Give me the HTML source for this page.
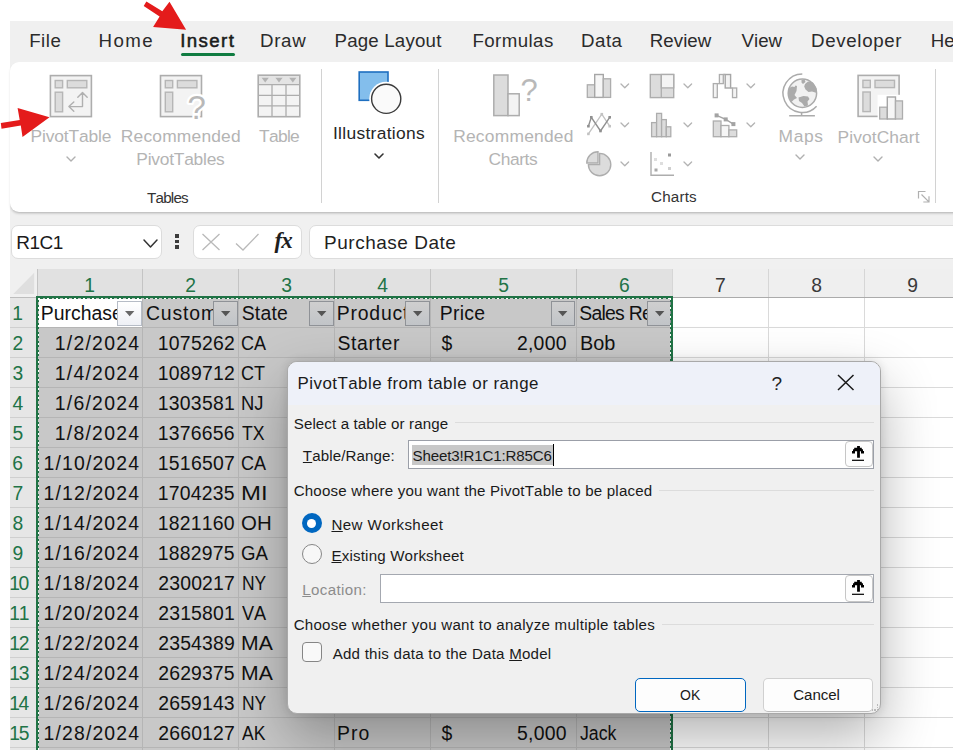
<!DOCTYPE html>
<html lang="en"><head><meta charset="utf-8"><title>PivotTable from table or range</title>
<style>

html,body{margin:0;padding:0;background:#fff;}
body{width:953px;height:750px;overflow:hidden;font-family:"Liberation Sans",sans-serif;}
#app{position:relative;width:953px;height:750px;overflow:hidden;background:#fff;}
#app div{position:absolute;box-sizing:border-box;}
#app svg{position:absolute;overflow:visible;}
.t{position:absolute;white-space:pre;font-kerning:none;}
u{text-decoration:underline;text-underline-offset:1px;text-decoration-thickness:1px;}

</style></head><body>
<div id="app">
<div style="left:10px;top:21px;width:943px;height:249px;background:#f0f0f0;"></div>
<span class="t" style="top:30.40px;font-size:18.7px;line-height:21px;left:29.17px;color:#2b2b2b;letter-spacing:0.511px;">File</span>
<span class="t" style="top:30.40px;font-size:18.7px;line-height:21px;left:98.47px;color:#2b2b2b;letter-spacing:1.461px;">Home</span>
<span class="t" style="top:30.40px;font-size:18.7px;line-height:21px;left:259.97px;color:#2b2b2b;letter-spacing:0.717px;">Draw</span>
<span class="t" style="top:30.40px;font-size:18.7px;line-height:21px;left:334.47px;color:#2b2b2b;letter-spacing:0.196px;">Page Layout</span>
<span class="t" style="top:30.40px;font-size:18.7px;line-height:21px;left:472.47px;color:#2b2b2b;letter-spacing:0.411px;">Formulas</span>
<span class="t" style="top:30.40px;font-size:18.7px;line-height:21px;left:580.97px;color:#2b2b2b;letter-spacing:0.511px;">Data</span>
<span class="t" style="top:30.40px;font-size:18.7px;line-height:21px;left:649.87px;color:#2b2b2b;letter-spacing:0.015px;">Review</span>
<span class="t" style="top:30.40px;font-size:18.7px;line-height:21px;left:741.62px;color:#2b2b2b;">View</span>
<span class="t" style="top:30.40px;font-size:18.7px;line-height:21px;left:811.07px;color:#2b2b2b;letter-spacing:0.663px;">Developer</span>
<span class="t" style="top:30.40px;font-size:18.7px;line-height:21px;left:180.17px;color:#1b1b1b;letter-spacing:1.399px;-webkit-text-stroke:0.55px #1b1b1b;">Insert</span>
<span class="t" style="top:30.40px;font-size:18.7px;line-height:21px;left:930.67px;color:#2b2b2b;">Help</span>
<div style="left:181.4px;top:53px;width:53.4px;height:3.4px;background:#107c41;border-radius:2px;"></div>
<div style="left:10px;top:62px;width:960px;height:150px;background:#fff;border-radius:9px;box-shadow:0 2px 3px -1px rgba(0,0,0,.28);"></div>
<div style="left:321px;top:69px;width:1px;height:134px;background:#d2d2d2;"></div>
<div style="left:438px;top:69px;width:1px;height:134px;background:#d2d2d2;"></div>
<div style="left:935px;top:69px;width:1px;height:134px;background:#d2d2d2;"></div>
<span class="t" style="top:188.60px;font-size:15.2px;line-height:17px;left:147.06px;color:#333;letter-spacing:-0.786px;">Tables</span>
<span class="t" style="top:188.10px;font-size:15.2px;line-height:17px;left:651.03px;color:#333;letter-spacing:0.190px;">Charts</span>
<span class="t" style="top:125.60px;font-size:17.4px;line-height:20px;left:30.57px;color:#b4b4b4;letter-spacing:-0.134px;">PivotTable</span>
<span class="t" style="top:125.60px;font-size:17.4px;line-height:20px;left:120.77px;color:#b4b4b4;letter-spacing:0.196px;">Recommended</span>
<span class="t" style="top:149.20px;font-size:17.4px;line-height:20px;left:136.37px;color:#b4b4b4;letter-spacing:-0.245px;">PivotTables</span>
<span class="t" style="top:125.60px;font-size:17.4px;line-height:20px;left:259.11px;color:#b4b4b4;letter-spacing:-0.715px;">Table</span>
<span class="t" style="top:123.20px;font-size:17.4px;line-height:20px;left:332.99px;color:#262626;letter-spacing:0.303px;">Illustrations</span>
<span class="t" style="top:125.60px;font-size:17.4px;line-height:20px;left:453.17px;color:#b4b4b4;letter-spacing:0.236px;">Recommended</span>
<span class="t" style="top:149.20px;font-size:17.4px;line-height:20px;left:488.52px;color:#b4b4b4;letter-spacing:-0.427px;">Charts</span>
<span class="t" style="top:125.60px;font-size:17.4px;line-height:20px;left:778.57px;color:#b4b4b4;letter-spacing:0.603px;">Maps</span>
<span class="t" style="top:127.40px;font-size:17.4px;line-height:20px;left:837.57px;color:#b4b4b4;letter-spacing:0.092px;">PivotChart</span>
<svg style="left:65.5px;top:155.7px" width="10" height="6" viewBox="-5.0 -3.0 10 6"><path d="M-4.0 -2.0 L0 2.0 L4.0 -2.0" fill="none" stroke="#b0b0b0" stroke-width="1.4" stroke-linecap="round" stroke-linejoin="round"/></svg>
<svg style="left:374.0px;top:152.5px" width="10" height="6" viewBox="-5.0 -3.0 10 6"><path d="M-4.0 -2.0 L0 2.0 L4.0 -2.0" fill="none" stroke="#333" stroke-width="1.6" stroke-linecap="round" stroke-linejoin="round"/></svg>
<svg style="left:795.0px;top:154.0px" width="10" height="6" viewBox="-5.0 -3.0 10 6"><path d="M-4.0 -2.0 L0 2.0 L4.0 -2.0" fill="none" stroke="#b0b0b0" stroke-width="1.4" stroke-linecap="round" stroke-linejoin="round"/></svg>
<svg style="left:872.5px;top:156.0px" width="10" height="6" viewBox="-5.0 -3.0 10 6"><path d="M-4.0 -2.0 L0 2.0 L4.0 -2.0" fill="none" stroke="#b0b0b0" stroke-width="1.4" stroke-linecap="round" stroke-linejoin="round"/></svg>
<div style="left:10.5px;top:224.5px;width:151px;height:34px;background:#fff;border:1px solid #dcdcdc;border-radius:7px;"></div>
<span class="t" style="top:231.60px;font-size:19px;line-height:21px;left:16.24px;color:#1a1a1a;letter-spacing:-0.530px;">R1C1</span>
<svg style="left:143.3px;top:238.5px" width="15" height="9" viewBox="-7.5 -4.5 15 9"><path d="M-6.5 -3.5 L0 3.5 L6.5 -3.5" fill="none" stroke="#333" stroke-width="1.5" stroke-linecap="round" stroke-linejoin="round"/></svg>
<div style="left:175.3px;top:234.3px;width:3.3px;height:3.3px;background:#3c3c3c;"></div>
<div style="left:175.3px;top:239.85000000000002px;width:3.3px;height:3.3px;background:#3c3c3c;"></div>
<div style="left:175.3px;top:245.4px;width:3.3px;height:3.3px;background:#3c3c3c;"></div>
<div style="left:192.5px;top:224.5px;width:109px;height:34px;background:#fff;border:1px solid #dcdcdc;border-radius:7px;"></div>
<svg style="left:200px;top:231px" width="64" height="22" viewBox="200 231 64 22"><path d="M202.5 234 L219.5 250 M219.5 234 L202.5 250" stroke="#b9b9b9" stroke-width="1.3" fill="none"/><path d="M236 243.5 L243 250 L258.5 234" stroke="#b9b9b9" stroke-width="1.3" fill="none"/></svg>
<span class="t" style="left:274.5px;top:227.5px;font-family:'Liberation Serif',serif;font-style:italic;font-weight:bold;font-size:23px;line-height:26px;color:#1e1e1e;letter-spacing:-1px;">fx</span>
<div style="left:308.5px;top:224.5px;width:660px;height:34px;background:#fff;border:1px solid #dcdcdc;border-radius:7px;"></div>
<span class="t" style="top:232.20px;font-size:19px;line-height:21px;left:324.04px;color:#1f1f1f;letter-spacing:0.510px;">Purchase Date</span>
<div style="left:10px;top:297px;width:943px;height:460px;background:#fff;"></div>
<div style="left:10px;top:269px;width:943px;height:28px;background:#efefef;"></div>
<div style="left:37px;top:269px;width:635px;height:28px;background:#e1e1e1;"></div>
<div style="left:10px;top:269px;width:27px;height:28px;background:#f0f0f0;"></div>
<svg style="left:0;top:0" width="40" height="300" viewBox="0 0 40 300"><path d="M34.2 272.8 L34.2 293.9 L13.2 293.9 Z" fill="#dfdfdf"/></svg>
<div style="left:10px;top:297px;width:27px;height:460px;background:#e6e6e6;"></div>
<div style="left:37px;top:297px;width:635px;height:460px;background:#c8c8c8;"></div>
<div style="left:39px;top:299px;width:103px;height:28px;background:#fff;"></div>
<div style="left:142px;top:269px;width:1px;height:28px;background:#c4c4c4;"></div>
<div style="left:142px;top:297px;width:1px;height:460px;background:#b5b5b5;"></div>
<div style="left:238px;top:269px;width:1px;height:28px;background:#c4c4c4;"></div>
<div style="left:238px;top:297px;width:1px;height:460px;background:#b5b5b5;"></div>
<div style="left:334px;top:269px;width:1px;height:28px;background:#c4c4c4;"></div>
<div style="left:334px;top:297px;width:1px;height:460px;background:#b5b5b5;"></div>
<div style="left:430px;top:269px;width:1px;height:28px;background:#c4c4c4;"></div>
<div style="left:430px;top:297px;width:1px;height:460px;background:#b5b5b5;"></div>
<div style="left:576px;top:269px;width:1px;height:28px;background:#c4c4c4;"></div>
<div style="left:576px;top:297px;width:1px;height:460px;background:#b5b5b5;"></div>
<div style="left:672px;top:269px;width:1px;height:28px;background:#d6d6d6;"></div>
<div style="left:672px;top:297px;width:1px;height:460px;background:#dadada;"></div>
<div style="left:768px;top:269px;width:1px;height:28px;background:#d6d6d6;"></div>
<div style="left:768px;top:297px;width:1px;height:460px;background:#dadada;"></div>
<div style="left:864px;top:269px;width:1px;height:28px;background:#d6d6d6;"></div>
<div style="left:864px;top:297px;width:1px;height:460px;background:#dadada;"></div>
<div style="left:37px;top:269px;width:1px;height:28px;background:#c4c4c4;"></div>
<div style="left:10px;top:297px;width:27px;height:1px;background:#bdbdbd;"></div>
<div style="left:10px;top:327px;width:27px;height:1px;background:#cfcfcf;"></div>
<div style="left:37px;top:327px;width:635px;height:1px;background:#b5b5b5;"></div>
<div style="left:672px;top:327px;width:281px;height:1px;background:#dadada;"></div>
<div style="left:10px;top:357px;width:27px;height:1px;background:#cfcfcf;"></div>
<div style="left:37px;top:357px;width:635px;height:1px;background:#b5b5b5;"></div>
<div style="left:672px;top:357px;width:281px;height:1px;background:#dadada;"></div>
<div style="left:10px;top:387px;width:27px;height:1px;background:#cfcfcf;"></div>
<div style="left:37px;top:387px;width:635px;height:1px;background:#b5b5b5;"></div>
<div style="left:672px;top:387px;width:281px;height:1px;background:#dadada;"></div>
<div style="left:10px;top:417px;width:27px;height:1px;background:#cfcfcf;"></div>
<div style="left:37px;top:417px;width:635px;height:1px;background:#b5b5b5;"></div>
<div style="left:672px;top:417px;width:281px;height:1px;background:#dadada;"></div>
<div style="left:10px;top:447px;width:27px;height:1px;background:#cfcfcf;"></div>
<div style="left:37px;top:447px;width:635px;height:1px;background:#b5b5b5;"></div>
<div style="left:672px;top:447px;width:281px;height:1px;background:#dadada;"></div>
<div style="left:10px;top:477px;width:27px;height:1px;background:#cfcfcf;"></div>
<div style="left:37px;top:477px;width:635px;height:1px;background:#b5b5b5;"></div>
<div style="left:672px;top:477px;width:281px;height:1px;background:#dadada;"></div>
<div style="left:10px;top:507px;width:27px;height:1px;background:#cfcfcf;"></div>
<div style="left:37px;top:507px;width:635px;height:1px;background:#b5b5b5;"></div>
<div style="left:672px;top:507px;width:281px;height:1px;background:#dadada;"></div>
<div style="left:10px;top:537px;width:27px;height:1px;background:#cfcfcf;"></div>
<div style="left:37px;top:537px;width:635px;height:1px;background:#b5b5b5;"></div>
<div style="left:672px;top:537px;width:281px;height:1px;background:#dadada;"></div>
<div style="left:10px;top:567px;width:27px;height:1px;background:#cfcfcf;"></div>
<div style="left:37px;top:567px;width:635px;height:1px;background:#b5b5b5;"></div>
<div style="left:672px;top:567px;width:281px;height:1px;background:#dadada;"></div>
<div style="left:10px;top:597px;width:27px;height:1px;background:#cfcfcf;"></div>
<div style="left:37px;top:597px;width:635px;height:1px;background:#b5b5b5;"></div>
<div style="left:672px;top:597px;width:281px;height:1px;background:#dadada;"></div>
<div style="left:10px;top:627px;width:27px;height:1px;background:#cfcfcf;"></div>
<div style="left:37px;top:627px;width:635px;height:1px;background:#b5b5b5;"></div>
<div style="left:672px;top:627px;width:281px;height:1px;background:#dadada;"></div>
<div style="left:10px;top:657px;width:27px;height:1px;background:#cfcfcf;"></div>
<div style="left:37px;top:657px;width:635px;height:1px;background:#b5b5b5;"></div>
<div style="left:672px;top:657px;width:281px;height:1px;background:#dadada;"></div>
<div style="left:10px;top:687px;width:27px;height:1px;background:#cfcfcf;"></div>
<div style="left:37px;top:687px;width:635px;height:1px;background:#b5b5b5;"></div>
<div style="left:672px;top:687px;width:281px;height:1px;background:#dadada;"></div>
<div style="left:10px;top:717px;width:27px;height:1px;background:#cfcfcf;"></div>
<div style="left:37px;top:717px;width:635px;height:1px;background:#b5b5b5;"></div>
<div style="left:672px;top:717px;width:281px;height:1px;background:#dadada;"></div>
<div style="left:10px;top:747px;width:27px;height:1px;background:#cfcfcf;"></div>
<div style="left:37px;top:747px;width:635px;height:1px;background:#b5b5b5;"></div>
<div style="left:672px;top:747px;width:281px;height:1px;background:#dadada;"></div>
<div style="left:10px;top:777px;width:27px;height:1px;background:#cfcfcf;"></div>
<div style="left:37px;top:777px;width:635px;height:1px;background:#b5b5b5;"></div>
<div style="left:672px;top:777px;width:281px;height:1px;background:#dadada;"></div>
<div style="left:672px;top:297px;width:281px;height:1px;background:#ababab;"></div>
<span class="t" style="top:274.50px;font-size:19.3px;line-height:21px;left:84.37px;color:#217346;">1</span>
<span class="t" style="top:274.50px;font-size:19.3px;line-height:21px;left:185.13px;color:#217346;">2</span>
<span class="t" style="top:274.50px;font-size:19.3px;line-height:21px;left:281.19px;color:#217346;">3</span>
<span class="t" style="top:274.50px;font-size:19.3px;line-height:21px;left:377.19px;color:#217346;">4</span>
<span class="t" style="top:274.50px;font-size:19.3px;line-height:21px;left:498.15px;color:#217346;">5</span>
<span class="t" style="top:274.50px;font-size:19.3px;line-height:21px;left:619.07px;color:#217346;">6</span>
<span class="t" style="top:274.50px;font-size:19.3px;line-height:21px;left:715.12px;color:#3a3a3a;">7</span>
<span class="t" style="top:274.50px;font-size:19.3px;line-height:21px;left:811.13px;color:#3a3a3a;">8</span>
<span class="t" style="top:274.50px;font-size:19.3px;line-height:21px;left:907.14px;color:#3a3a3a;">9</span>
<div style="left:10px;top:297px;width:27px;height:460px;overflow:hidden;">
<span class="t" style="top:5.80px;font-size:19.3px;line-height:21px;left:2.17px;color:#217346;">1</span>
<span class="t" style="top:35.80px;font-size:19.3px;line-height:21px;left:2.43px;color:#217346;">2</span>
<span class="t" style="top:65.80px;font-size:19.3px;line-height:21px;left:2.49px;color:#217346;">3</span>
<span class="t" style="top:95.80px;font-size:19.3px;line-height:21px;left:2.49px;color:#217346;">4</span>
<span class="t" style="top:125.80px;font-size:19.3px;line-height:21px;left:2.45px;color:#217346;">5</span>
<span class="t" style="top:155.80px;font-size:19.3px;line-height:21px;left:2.37px;color:#217346;">6</span>
<span class="t" style="top:185.80px;font-size:19.3px;line-height:21px;left:2.42px;color:#217346;">7</span>
<span class="t" style="top:215.80px;font-size:19.3px;line-height:21px;left:2.43px;color:#217346;">8</span>
<span class="t" style="top:245.80px;font-size:19.3px;line-height:21px;left:2.44px;color:#217346;">9</span>
<span class="t" style="top:275.80px;font-size:19.3px;line-height:21px;left:-0.87px;color:#217346;letter-spacing:-1.243px;">10</span>
<span class="t" style="top:305.80px;font-size:19.3px;line-height:21px;left:-0.87px;color:#217346;letter-spacing:-1.055px;">11</span>
<span class="t" style="top:335.80px;font-size:19.3px;line-height:21px;left:-0.87px;color:#217346;letter-spacing:-1.027px;">12</span>
<span class="t" style="top:365.80px;font-size:19.3px;line-height:21px;left:-0.87px;color:#217346;letter-spacing:-1.149px;">13</span>
<span class="t" style="top:395.80px;font-size:19.3px;line-height:21px;left:-0.87px;color:#217346;letter-spacing:-1.432px;">14</span>
<span class="t" style="top:425.80px;font-size:19.3px;line-height:21px;left:-0.87px;color:#217346;letter-spacing:-1.187px;">15</span>
</div>
<div style="left:37px;top:297px;width:80.5px;height:30px;overflow:hidden;">
<span class="t" style="left:3.81px;top:5.20px;font-size:19.4px;line-height:22px;color:#111;letter-spacing:-0.001px;">Purchase Date</span>
</div>
<div style="left:142px;top:297px;width:71.69999999999999px;height:30px;overflow:hidden;">
<span class="t" style="left:3.91px;top:5.20px;font-size:19.4px;line-height:22px;color:#111;letter-spacing:0.885px;">Customer</span>
</div>
<div style="left:238px;top:297px;width:71.69999999999999px;height:30px;overflow:hidden;">
<span class="t" style="left:3.72px;top:5.20px;font-size:19.4px;line-height:22px;color:#111;letter-spacing:0.186px;">State</span>
</div>
<div style="left:334px;top:297px;width:71.60000000000002px;height:30px;overflow:hidden;">
<span class="t" style="left:2.71px;top:5.20px;font-size:19.4px;line-height:22px;color:#111;letter-spacing:0.813px;">Product</span>
</div>
<div style="left:430px;top:297px;width:121px;height:30px;overflow:hidden;">
<span class="t" style="left:9.81px;top:5.20px;font-size:19.4px;line-height:22px;color:#111;letter-spacing:0.239px;">Price</span>
</div>
<div style="left:576px;top:297px;width:71.29999999999995px;height:30px;overflow:hidden;">
<span class="t" style="left:3.22px;top:5.20px;font-size:19.4px;line-height:22px;color:#111;letter-spacing:-0.726px;">Sales Rep</span>
</div>
<div style="left:117.1px;top:301.2px;width:24.5px;height:24.4px;background:linear-gradient(#ffffff,#eef0f5);border:1px solid #b6bcc6;"><svg style="left:6.7px;top:8.8px" width="10" height="6"><path d="M0 0 L9.4 0 L4.7 5.2 Z" fill="#686868"/></svg></div>
<div style="left:213.29999999999998px;top:301.2px;width:24.5px;height:24.4px;background:linear-gradient(#cfcfcf,#c1c4c8);border:1px solid #8f9297;"><svg style="left:6.7px;top:8.8px" width="10" height="6"><path d="M0 0 L9.4 0 L4.7 5.2 Z" fill="#555"/></svg></div>
<div style="left:309.3px;top:301.2px;width:24.5px;height:24.4px;background:linear-gradient(#cfcfcf,#c1c4c8);border:1px solid #8f9297;"><svg style="left:6.7px;top:8.8px" width="10" height="6"><path d="M0 0 L9.4 0 L4.7 5.2 Z" fill="#555"/></svg></div>
<div style="left:405.20000000000005px;top:301.2px;width:24.5px;height:24.4px;background:linear-gradient(#cfcfcf,#c1c4c8);border:1px solid #8f9297;"><svg style="left:6.7px;top:8.8px" width="10" height="6"><path d="M0 0 L9.4 0 L4.7 5.2 Z" fill="#555"/></svg></div>
<div style="left:550.6px;top:301.2px;width:24.5px;height:24.4px;background:linear-gradient(#cfcfcf,#c1c4c8);border:1px solid #8f9297;"><svg style="left:6.7px;top:8.8px" width="10" height="6"><path d="M0 0 L9.4 0 L4.7 5.2 Z" fill="#555"/></svg></div>
<div style="left:646.9px;top:301.2px;width:24.5px;height:24.4px;background:linear-gradient(#cfcfcf,#c1c4c8);border:1px solid #8f9297;"><svg style="left:6.7px;top:8.8px" width="10" height="6"><path d="M0 0 L9.4 0 L4.7 5.2 Z" fill="#555"/></svg></div>
<span class="t" style="top:331.80px;font-size:19.4px;line-height:22px;left:54.72px;color:#111;letter-spacing:1.261px;">1/2/2024</span>
<span class="t" style="top:331.80px;font-size:19.4px;line-height:22px;left:157.82px;color:#111;letter-spacing:0.238px;">1075262</span>
<span class="t" style="top:331.80px;font-size:19.4px;line-height:22px;left:241.28px;color:#111;transform:scaleX(0.9295);transform-origin:0 0;">CA</span>
<span class="t" style="top:331.80px;font-size:19.4px;line-height:22px;left:337.42px;color:#111;letter-spacing:0.631px;">Starter</span>
<span class="t" style="top:331.80px;font-size:19.4px;line-height:22px;left:441.59px;color:#111;">$</span>
<span class="t" style="top:331.80px;font-size:19.4px;line-height:22px;left:516.92px;color:#111;letter-spacing:0.272px;">2,000</span>
<span class="t" style="top:331.80px;font-size:19.4px;line-height:22px;left:579.57px;color:#111;transform:scaleX(1.0245);transform-origin:0 0;">Bob</span>
<span class="t" style="top:361.80px;font-size:19.4px;line-height:22px;left:54.72px;color:#111;letter-spacing:1.261px;">1/4/2024</span>
<span class="t" style="top:361.80px;font-size:19.4px;line-height:22px;left:157.82px;color:#111;letter-spacing:0.238px;">1089712</span>
<span class="t" style="top:361.80px;font-size:19.4px;line-height:22px;left:241.28px;color:#111;transform:scaleX(0.9292);transform-origin:0 0;">CT</span>
<span class="t" style="top:391.80px;font-size:19.4px;line-height:22px;left:54.72px;color:#111;letter-spacing:1.261px;">1/6/2024</span>
<span class="t" style="top:391.80px;font-size:19.4px;line-height:22px;left:157.82px;color:#111;letter-spacing:0.233px;">1303581</span>
<span class="t" style="top:391.80px;font-size:19.4px;line-height:22px;left:241.49px;color:#111;transform:scaleX(0.9478);transform-origin:0 0;">NJ</span>
<span class="t" style="top:421.80px;font-size:19.4px;line-height:22px;left:54.72px;color:#111;letter-spacing:1.261px;">1/8/2024</span>
<span class="t" style="top:421.80px;font-size:19.4px;line-height:22px;left:157.82px;color:#111;letter-spacing:0.217px;">1376656</span>
<span class="t" style="top:421.80px;font-size:19.4px;line-height:22px;left:241.80px;color:#111;transform:scaleX(0.9103);transform-origin:0 0;">TX</span>
<span class="t" style="top:451.80px;font-size:19.4px;line-height:22px;left:43.52px;color:#111;letter-spacing:1.155px;">1/10/2024</span>
<span class="t" style="top:451.80px;font-size:19.4px;line-height:22px;left:157.82px;color:#111;letter-spacing:0.238px;">1516507</span>
<span class="t" style="top:451.80px;font-size:19.4px;line-height:22px;left:241.28px;color:#111;transform:scaleX(0.9295);transform-origin:0 0;">CA</span>
<span class="t" style="top:481.80px;font-size:19.4px;line-height:22px;left:43.52px;color:#111;letter-spacing:1.155px;">1/12/2024</span>
<span class="t" style="top:481.80px;font-size:19.4px;line-height:22px;left:157.82px;color:#111;letter-spacing:0.211px;">1704235</span>
<span class="t" style="top:481.80px;font-size:19.4px;line-height:22px;left:241.04px;color:#111;transform:scaleX(1.2329);transform-origin:0 0;">MI</span>
<span class="t" style="top:511.80px;font-size:19.4px;line-height:22px;left:43.52px;color:#111;letter-spacing:1.155px;">1/14/2024</span>
<span class="t" style="top:511.80px;font-size:19.4px;line-height:22px;left:157.82px;color:#111;letter-spacing:0.202px;">1821160</span>
<span class="t" style="top:511.80px;font-size:19.4px;line-height:22px;left:241.23px;color:#111;transform:scaleX(1.0527);transform-origin:0 0;">OH</span>
<span class="t" style="top:541.80px;font-size:19.4px;line-height:22px;left:43.52px;color:#111;letter-spacing:1.155px;">1/16/2024</span>
<span class="t" style="top:541.80px;font-size:19.4px;line-height:22px;left:157.82px;color:#111;letter-spacing:0.211px;">1882975</span>
<span class="t" style="top:541.80px;font-size:19.4px;line-height:22px;left:241.26px;color:#111;transform:scaleX(0.9624);transform-origin:0 0;">GA</span>
<span class="t" style="top:571.80px;font-size:19.4px;line-height:22px;left:43.52px;color:#111;letter-spacing:1.155px;">1/18/2024</span>
<span class="t" style="top:571.80px;font-size:19.4px;line-height:22px;left:158.32px;color:#111;letter-spacing:0.154px;">2300217</span>
<span class="t" style="top:571.80px;font-size:19.4px;line-height:22px;left:241.57px;color:#111;transform:scaleX(0.8984);transform-origin:0 0;">NY</span>
<span class="t" style="top:601.80px;font-size:19.4px;line-height:22px;left:43.52px;color:#111;letter-spacing:1.155px;">1/20/2024</span>
<span class="t" style="top:601.80px;font-size:19.4px;line-height:22px;left:158.32px;color:#111;letter-spacing:0.150px;">2315801</span>
<span class="t" style="top:601.80px;font-size:19.4px;line-height:22px;left:242.12px;color:#111;transform:scaleX(0.9357);transform-origin:0 0;">VA</span>
<span class="t" style="top:631.80px;font-size:19.4px;line-height:22px;left:43.52px;color:#111;letter-spacing:1.155px;">1/22/2024</span>
<span class="t" style="top:631.80px;font-size:19.4px;line-height:22px;left:158.32px;color:#111;letter-spacing:0.145px;">2354389</span>
<span class="t" style="top:631.80px;font-size:19.4px;line-height:22px;left:241.26px;color:#111;transform:scaleX(1.0921);transform-origin:0 0;">MA</span>
<span class="t" style="top:661.80px;font-size:19.4px;line-height:22px;left:43.52px;color:#111;letter-spacing:1.155px;">1/24/2024</span>
<span class="t" style="top:661.80px;font-size:19.4px;line-height:22px;left:158.32px;color:#111;letter-spacing:0.127px;">2629375</span>
<span class="t" style="top:661.80px;font-size:19.4px;line-height:22px;left:241.26px;color:#111;transform:scaleX(1.0921);transform-origin:0 0;">MA</span>
<span class="t" style="top:691.80px;font-size:19.4px;line-height:22px;left:43.52px;color:#111;letter-spacing:1.155px;">1/26/2024</span>
<span class="t" style="top:691.80px;font-size:19.4px;line-height:22px;left:158.32px;color:#111;letter-spacing:0.134px;">2659143</span>
<span class="t" style="top:691.80px;font-size:19.4px;line-height:22px;left:241.57px;color:#111;transform:scaleX(0.8984);transform-origin:0 0;">NY</span>
<span class="t" style="top:691.80px;font-size:19.4px;line-height:22px;left:517.12px;color:#111;letter-spacing:0.222px;">5,000</span>
<span class="t" style="top:721.80px;font-size:19.4px;line-height:22px;left:43.52px;color:#111;letter-spacing:1.155px;">1/28/2024</span>
<span class="t" style="top:721.80px;font-size:19.4px;line-height:22px;left:158.32px;color:#111;letter-spacing:0.154px;">2660127</span>
<span class="t" style="top:721.80px;font-size:19.4px;line-height:22px;left:242.17px;color:#111;transform:scaleX(0.9054);transform-origin:0 0;">AK</span>
<span class="t" style="top:721.80px;font-size:19.4px;line-height:22px;left:337.01px;color:#111;letter-spacing:1.058px;">Pro</span>
<span class="t" style="top:721.80px;font-size:19.4px;line-height:22px;left:441.59px;color:#111;">$</span>
<span class="t" style="top:721.80px;font-size:19.4px;line-height:22px;left:517.12px;color:#111;letter-spacing:0.222px;">5,000</span>
<span class="t" style="top:721.80px;font-size:19.4px;line-height:22px;left:579.72px;color:#111;transform:scaleX(0.9138);transform-origin:0 0;">Jack</span>
<div style="left:36px;top:296px;width:637px;height:2px;background:#217346;"></div>
<div style="left:36px;top:296px;width:2px;height:460px;background:#217346;"></div>
<div style="left:671px;top:296px;width:2px;height:460px;background:#217346;"></div>
<div style="left:38px;top:298px;width:633px;height:1.4px;background:repeating-linear-gradient(90deg,#fff 0 2.25px,#217346 2.25px 4.5px,rgba(255,255,255,0) 4.5px 6.75px,#217346 6.75px 9px);"></div>
<div style="left:38px;top:298px;width:1.4px;height:460px;background:repeating-linear-gradient(180deg,#fff 0 2.25px,#217346 2.25px 4.5px,rgba(255,255,255,0) 4.5px 6.75px,#217346 6.75px 9px);"></div>
<div style="left:669.6px;top:298px;width:1.4px;height:460px;background:repeating-linear-gradient(180deg,#fff 0 2.25px,#217346 2.25px 4.5px,rgba(255,255,255,0) 4.5px 6.75px,#217346 6.75px 9px);"></div>
<div style="left:286.5px;top:361px;width:594px;height:352.5px;background:#f0f0f0;border:1px solid #a9a9a9;border-radius:10px;box-shadow:0 24px 56px rgba(0,0,0,.30),0 0 10px rgba(0,0,0,.12);overflow:hidden;"><div style="left:0;top:0;width:100%;height:43px;background:#eef1f9;"></div></div>
<span class="t" style="top:373.50px;font-size:16.9px;line-height:19px;left:297.51px;color:#1a1a1a;letter-spacing:0.476px;">PivotTable from table or range</span>
<span class="t" style="top:372.60px;font-size:19px;line-height:21px;left:771.42px;color:#222;">?</span>
<svg style="left:836px;top:373px" width="20" height="20" viewBox="836 373 20 20"><path d="M838 375 L853.5 390 M853.5 375 L838 390" stroke="#1a1a1a" stroke-width="1.5" fill="none"/></svg>
<span class="t" style="top:414.80px;font-size:15.1px;line-height:17px;left:293.71px;color:#1a1a1a;letter-spacing:0.115px;">Select a table or range</span>
<div style="left:455px;top:422px;width:418.5px;height:1px;background:#dcdcdc;"></div>
<span class="t" style="left:302.86px;top:446.80px;font-size:15.1px;line-height:17px;color:#1a1a1a;letter-spacing:0.114px;"><u>T</u>able/Range:</span>
<div style="left:408px;top:440px;width:466px;height:29px;background:#fff;border:1px solid #9b9fa8;"></div>
<div style="left:412px;top:445px;width:140.5px;height:19.5px;background:#c8c8c8;"></div>
<span class="t" style="top:447.00px;font-size:15.1px;line-height:17px;left:412.51px;color:#1a1a1a;letter-spacing:-0.151px;">Sheet3!R1C1:R85C6</span>
<div style="left:552.5px;top:444px;width:1px;height:21.5px;background:#000;"></div>
<div style="left:845.3px;top:441.2px;width:27.6px;height:26.3px;background:#fdfdfd;border:1px solid #c6c6c6;border-radius:4px;"><svg style="left:5.7px;top:4.1px" width="12" height="15" viewBox="0 0 12 15"><path d="M5.1 0 H7.9 V1.8 H9.8 V3.2 H11 V5 H12 V7.6 H9 V5.2 H7.9 V11.8 H5.1 V5.2 H3 V7.6 H0 V5 H1 V3.2 H2.2 V1.8 H5.1 Z" fill="#000"/><rect x="0" y="13.7" width="12" height="1.2" fill="#000"/></svg></div>
<span class="t" style="top:481.60px;font-size:15.1px;line-height:17px;left:293.63px;color:#1a1a1a;letter-spacing:0.199px;">Choose where you want the PivotTable to be placed</span>
<div style="left:659px;top:489.5px;width:214.5px;height:1px;background:#dcdcdc;"></div>
<div style="left:301.9px;top:513px;width:20px;height:20px;background:#0067c0;border-radius:50%;"><div style="left:5.5px;top:5.5px;width:9px;height:9px;border-radius:50%;background:#fff;"></div></div>
<span class="t" style="left:331.46px;top:516.20px;font-size:15.1px;line-height:17px;color:#1a1a1a;letter-spacing:0.415px;"><u>N</u>ew Worksheet</span>
<div style="left:301.9px;top:544.4px;width:20px;height:20px;background:#f7f7f7;border:1px solid #868686;border-radius:50%;"></div>
<span class="t" style="left:331.46px;top:547.10px;font-size:15.1px;line-height:17px;color:#1a1a1a;letter-spacing:0.183px;"><u>E</u>xisting Worksheet</span>
<span class="t" style="left:302.26px;top:580.70px;font-size:15.1px;line-height:17px;color:#8c8c8c;letter-spacing:0.354px;"><u>L</u>ocation:</span>
<div style="left:380px;top:574px;width:494px;height:29px;background:#fff;border:1px solid #a4a8b0;"></div>
<div style="left:845.2px;top:575.3px;width:27.6px;height:26.3px;background:#fdfdfd;border:1px solid #c6c6c6;border-radius:4px;"><svg style="left:5.7px;top:4.1px" width="12" height="15" viewBox="0 0 12 15"><path d="M5.1 0 H7.9 V1.8 H9.8 V3.2 H11 V5 H12 V7.6 H9 V5.2 H7.9 V11.8 H5.1 V5.2 H3 V7.6 H0 V5 H1 V3.2 H2.2 V1.8 H5.1 Z" fill="#000"/><rect x="0" y="13.7" width="12" height="1.2" fill="#000"/></svg></div>
<span class="t" style="top:616.30px;font-size:15.1px;line-height:17px;left:293.63px;color:#1a1a1a;letter-spacing:0.265px;">Choose whether you want to analyze multiple tables</span>
<div style="left:662px;top:624px;width:211.5px;height:1px;background:#dcdcdc;"></div>
<div style="left:302.2px;top:642px;width:20px;height:20px;background:#f9f9f9;border:1px solid #868686;border-radius:4px;"></div>
<span class="t" style="left:332.67px;top:645.00px;font-size:15.1px;line-height:17px;color:#1a1a1a;letter-spacing:0.237px;">Add this data to the Data <u>M</u>odel</span>
<div style="left:635px;top:678px;width:110.5px;height:33.5px;background:#fdfdfd;border:1.5px solid #0067c0;border-radius:5px;"></div>
<span class="t" style="top:686.10px;font-size:15.1px;line-height:17px;left:679.94px;color:#1a1a1a;transform:scaleX(0.9268);transform-origin:0 0;">OK</span>
<div style="left:762.5px;top:678px;width:110px;height:33.5px;background:#fdfdfd;border:1px solid #d0d0d0;border-bottom-color:#bdbdbd;border-radius:5px;"></div>
<span class="t" style="top:686.10px;font-size:15.1px;line-height:17px;left:793.23px;color:#1a1a1a;letter-spacing:-0.045px;">Cancel</span>
<svg style="left:0;top:0" width="953" height="220" viewBox="0 0 953 220"><rect x="50.4" y="75.6" width="41.00" height="41.00" fill="#f3f3f3" stroke="#adadad" stroke-width="1.6"/><rect x="55.199999999999996" y="80.5" width="7.40" height="7.30" fill="#dcdcdc" stroke="#b6b6b6" stroke-width="1.4"/><rect x="67.3" y="80.5" width="19.50" height="7.30" fill="#dcdcdc" stroke="#b6b6b6" stroke-width="1.4"/><rect x="55.199999999999996" y="92.19999999999999" width="7.40" height="19.60" fill="#dcdcdc" stroke="#b6b6b6" stroke-width="1.4"/><path d="M82.5 92.6 L82.5 106.6 L69 106.6 M77.8 97.3 L82.5 92.4 L87.2 97.3 M73.8 101.9 L68.9 106.6 L73.8 111.3" fill="none" stroke="#b0b0b0" stroke-width="1.4" stroke-linejoin="round" stroke-linecap="round"/><rect x="160.5" y="75.6" width="41.00" height="41.00" fill="#f3f3f3" stroke="#adadad" stroke-width="1.6"/><rect x="165.3" y="80.5" width="7.40" height="7.30" fill="#dcdcdc" stroke="#b6b6b6" stroke-width="1.4"/><rect x="177.4" y="80.5" width="19.50" height="7.30" fill="#dcdcdc" stroke="#b6b6b6" stroke-width="1.4"/><rect x="165.3" y="92.19999999999999" width="7.40" height="19.60" fill="#dcdcdc" stroke="#b6b6b6" stroke-width="1.4"/><text x="187.6" y="118.6" font-family="Liberation Sans, sans-serif" font-size="33" fill="#b8b8b8" stroke="#fff" stroke-width="4.5" paint-order="stroke" stroke-linejoin="round">?</text><rect x="258.2" y="75.2" width="41.60" height="41.50" fill="#f3f3f3" stroke="#adadad" stroke-width="1.6"/><rect x="259" y="76" width="40" height="8.4" fill="#e4e4e4"/><path d="M258.2 84.6 H299.8 M258.2 95.3 H299.8 M258.2 105.9 H299.8 M272 84.6 V116.7 M286 84.6 V116.7" fill="none" stroke="#adadad" stroke-width="1.3" /><path d="M261.59999999999997 77.8 L268.8 77.8 L265.2 82.4 Z" fill="#b3b3b3" stroke="none" stroke-width="0" /><path d="M275.4 77.8 L282.6 77.8 L279 82.4 Z" fill="#b3b3b3" stroke="none" stroke-width="0" /><path d="M289.2 77.8 L296.40000000000003 77.8 L292.8 82.4 Z" fill="#b3b3b3" stroke="none" stroke-width="0" /><rect x="359.2" y="72" width="28.80" height="28.30" fill="#83beec" stroke="#1e6fc0" stroke-width="1.6"/><circle cx="386.2" cy="98.8" r="17" fill="#fff"/><circle cx="386.2" cy="98.8" r="14.6" fill="#fafafa" stroke="#3b3b3b" stroke-width="1.4"/><rect x="493.8" y="75" width="14.20" height="40.60" fill="#dcdcdc" stroke="#adadad" stroke-width="1.5"/><rect x="508" y="93.8" width="11.20" height="21.80" fill="#f3f3f3" stroke="#adadad" stroke-width="1.5"/><text x="520.6" y="100.6" font-family="Liberation Sans, sans-serif" font-size="31" fill="#b9b9b9">?</text><rect x="587.3" y="84.8" width="7.40" height="12.60" fill="#dcdcdc" stroke="#adadad" stroke-width="1.3"/><rect x="594.7" y="74.5" width="8.60" height="22.90" fill="#f6f6f6" stroke="#a6a6a6" stroke-width="1.4"/><rect x="603.3" y="78.8" width="7.30" height="18.60" fill="#dcdcdc" stroke="#adadad" stroke-width="1.3"/><rect x="650.3" y="74.5" width="23.40" height="23.10" fill="#dcdcdc" stroke="#adadad" stroke-width="1.4"/><rect x="661.3" y="74.5" width="12.40" height="13.40" fill="#f4f4f4" stroke="#adadad" stroke-width="1.3"/><path d="M661.3 74.5 V97.6" fill="none" stroke="#adadad" stroke-width="1.3" /><rect x="713.3" y="83.6" width="4.00" height="14.00" fill="#f3f3f3" stroke="#adadad" stroke-width="1.3"/><rect x="719.4" y="74.5" width="3.90" height="9.10" fill="#f3f3f3" stroke="#adadad" stroke-width="1.3"/><rect x="725.2" y="74.5" width="5.40" height="13.50" fill="#f3f3f3" stroke="#a6a6a6" stroke-width="1.4"/><rect x="732.5" y="88" width="4.20" height="9.60" fill="#f3f3f3" stroke="#adadad" stroke-width="1.3"/><path d="M717.3 83.6 H719.4 M723.3 74.5 H725.2 M730.6 88 H732.5" fill="none" stroke="#adadad" stroke-width="1.3" /><path d="M588.4 133.9 L601.8 114.2 L609.7 126.2" fill="none" stroke="#c2c2c2" stroke-width="1.3" /><path d="M588.4 126.2 L591.3 117.3 L600.5 131 L609.7 117.3" fill="none" stroke="#909090" stroke-width="1.4" /><rect x="587.1" y="132.6" width="2.6" height="2.6" fill="#c2c2c2"/><rect x="600.5" y="112.9" width="2.6" height="2.6" fill="#c2c2c2"/><rect x="608.4000000000001" y="124.9" width="2.6" height="2.6" fill="#c2c2c2"/><rect x="587.1" y="124.9" width="2.6" height="2.6" fill="#909090"/><rect x="590.0" y="116.0" width="2.6" height="2.6" fill="#909090"/><rect x="599.2" y="129.7" width="2.6" height="2.6" fill="#909090"/><rect x="608.4000000000001" y="116.0" width="2.6" height="2.6" fill="#909090"/><rect x="651.6" y="122.6" width="5.00" height="14.10" fill="#dcdcdc" stroke="#adadad" stroke-width="1.3"/><rect x="656.6" y="113.4" width="5.00" height="23.30" fill="#dcdcdc" stroke="#adadad" stroke-width="1.3"/><rect x="661.6" y="119.6" width="4.70" height="17.10" fill="#dcdcdc" stroke="#adadad" stroke-width="1.3"/><rect x="666.3" y="126.8" width="4.50" height="9.90" fill="#dcdcdc" stroke="#adadad" stroke-width="1.3"/><rect x="713.3" y="121" width="7.70" height="15.70" fill="#dcdcdc" stroke="#adadad" stroke-width="1.3"/><rect x="721" y="125.5" width="7.90" height="11.20" fill="#f6f6f6" stroke="#adadad" stroke-width="1.3"/><rect x="728.9" y="129.9" width="7.80" height="6.80" fill="#dcdcdc" stroke="#adadad" stroke-width="1.3"/><path d="M716.6 115.4 L725.7 119.4 L733.4 124.1" fill="none" stroke="#a3a3a3" stroke-width="1.3" /><rect x="714.6" y="113.4" width="4" height="4" fill="#a3a3a3"/><rect x="723.7" y="117.4" width="4" height="4" fill="#a3a3a3"/><rect x="731.4" y="122.1" width="4" height="4" fill="#a3a3a3"/><path d="M599.6 164.6 L599.6 153.4 A11.2 11.2 0 1 1 588.4 164.6 Z" fill="#dcdcdc" stroke="#adadad" stroke-width="1.4" /><path d="M598 163 L586.8 163 A11.2 11.2 0 0 1 598 151.8 Z" fill="#dcdcdc" stroke="#adadad" stroke-width="1.4" /><path d="M651 152 V175.2 H674" fill="none" stroke="#adadad" stroke-width="1.4" /><rect x="668.0" y="153.5" width="3" height="3" fill="#9a9a9a"/><rect x="654.0" y="158.0" width="3" height="3" fill="#dedede"/><rect x="660.0" y="162.0" width="3" height="3" fill="#dedede"/><rect x="668.0" y="167.0" width="3" height="3" fill="#cfcfcf"/><rect x="654.5" y="168.5" width="3" height="3" fill="#a8a8a8"/><circle cx="802.4" cy="93.2" r="14.2" fill="#f1f1f1" stroke="#ababab" stroke-width="1.5"/><path d="M802.3 73.9 A19.3 19.3 0 1 0 816.6 106.2" fill="none" stroke="#ababab" stroke-width="1.5" /><path d="M801.6 112.2 V115.8 M789.2 115.8 H814.9" fill="none" stroke="#ababab" stroke-width="1.5" /><path d="M789 88 L792 86.5 L794.5 87 L795.5 85.5 L797 86 L796.5 91 L794.5 95 L797 98 L794 99.5 L791.5 102 L789 98 L788.2 93 Z M801.5 80 L804.5 79.2 L805.5 82 L803 84 L801.5 82.5 Z M805 84 L808 81.5 L813 82.5 L816.3 88 L816.8 93 L812 91.5 L808.5 92 L805.5 89.5 L804.2 86.5 Z M798.5 97.5 L803.5 96 L808 96.5 L809.5 99 L807.5 101.5 L808 105.5 L804.5 106.6 L802 103 L799 101 Z" fill="#ababab" stroke="none" stroke-width="0" /><rect x="858.1" y="75.4" width="41.00" height="41.00" fill="#f3f3f3" stroke="#adadad" stroke-width="1.6"/><rect x="862.9" y="80.30000000000001" width="7.40" height="7.30" fill="#dcdcdc" stroke="#b6b6b6" stroke-width="1.4"/><rect x="875.0" y="80.30000000000001" width="19.50" height="7.30" fill="#dcdcdc" stroke="#b6b6b6" stroke-width="1.4"/><rect x="862.9" y="92.0" width="7.40" height="19.60" fill="#dcdcdc" stroke="#b6b6b6" stroke-width="1.4"/><rect x="877.6" y="94.8" width="26" height="25" fill="#fff"/><rect x="879.7" y="107.2" width="7.60" height="11.80" fill="#dcdcdc" stroke="#adadad" stroke-width="1.3"/><rect x="887.3" y="97" width="8.20" height="22.00" fill="#f6f6f6" stroke="#a6a6a6" stroke-width="1.4"/><rect x="895.5" y="100.9" width="7.00" height="18.10" fill="#dcdcdc" stroke="#adadad" stroke-width="1.3"/><path d="M925.5 191.5 H918.5 V198.5 M921.5 194.5 L928.7 201.7 M929 196.3 V202 H923.3" fill="none" stroke="#b0b0b0" stroke-width="1.2" /></svg>
<svg style="left:619.7px;top:83.3px" width="9.6" height="5.8" viewBox="-4.8 -2.9 9.6 5.8"><path d="M-3.8 -1.9 L0 1.9 L3.8 -1.9" fill="none" stroke="#b3b3b3" stroke-width="1.3" stroke-linecap="round" stroke-linejoin="round"/></svg>
<svg style="left:682.7px;top:83.3px" width="9.6" height="5.8" viewBox="-4.8 -2.9 9.6 5.8"><path d="M-3.8 -1.9 L0 1.9 L3.8 -1.9" fill="none" stroke="#b3b3b3" stroke-width="1.3" stroke-linecap="round" stroke-linejoin="round"/></svg>
<svg style="left:745.6px;top:83.3px" width="9.6" height="5.8" viewBox="-4.8 -2.9 9.6 5.8"><path d="M-3.8 -1.9 L0 1.9 L3.8 -1.9" fill="none" stroke="#b3b3b3" stroke-width="1.3" stroke-linecap="round" stroke-linejoin="round"/></svg>
<svg style="left:619.7px;top:122.3px" width="9.6" height="5.8" viewBox="-4.8 -2.9 9.6 5.8"><path d="M-3.8 -1.9 L0 1.9 L3.8 -1.9" fill="none" stroke="#b3b3b3" stroke-width="1.3" stroke-linecap="round" stroke-linejoin="round"/></svg>
<svg style="left:682.7px;top:122.3px" width="9.6" height="5.8" viewBox="-4.8 -2.9 9.6 5.8"><path d="M-3.8 -1.9 L0 1.9 L3.8 -1.9" fill="none" stroke="#b3b3b3" stroke-width="1.3" stroke-linecap="round" stroke-linejoin="round"/></svg>
<svg style="left:745.6px;top:122.3px" width="9.6" height="5.8" viewBox="-4.8 -2.9 9.6 5.8"><path d="M-3.8 -1.9 L0 1.9 L3.8 -1.9" fill="none" stroke="#b3b3b3" stroke-width="1.3" stroke-linecap="round" stroke-linejoin="round"/></svg>
<svg style="left:619.7px;top:161.29999999999998px" width="9.6" height="5.8" viewBox="-4.8 -2.9 9.6 5.8"><path d="M-3.8 -1.9 L0 1.9 L3.8 -1.9" fill="none" stroke="#b3b3b3" stroke-width="1.3" stroke-linecap="round" stroke-linejoin="round"/></svg>
<svg style="left:682.7px;top:161.29999999999998px" width="9.6" height="5.8" viewBox="-4.8 -2.9 9.6 5.8"><path d="M-3.8 -1.9 L0 1.9 L3.8 -1.9" fill="none" stroke="#b3b3b3" stroke-width="1.3" stroke-linecap="round" stroke-linejoin="round"/></svg>
<svg style="left:0;top:0" width="200" height="150" viewBox="0 0 200 150"><path d="M146.4 1.5 L162.3 11.3 L169.5 1.7 L186.1 29.8 L153.1 26.9 L159.6 16.4 L143.7 6 Z" fill="#e41b1b"/><path d="M0.8 123 L19.7 119.9 L17.6 108 L49.5 117.3 L22.5 137 L20.8 125.6 L1.5 128.8 Z" fill="#e41b1b"/></svg>
<div style="left:876.5px;top:709px;width:1.5px;height:1.5px;background:#b9b9b9;"></div>
<div style="left:874px;top:709px;width:1.5px;height:1.5px;background:#b9b9b9;"></div>
<div style="left:876.5px;top:706.5px;width:1.5px;height:1.5px;background:#b9b9b9;"></div>
<div style="left:871.5px;top:709px;width:1.5px;height:1.5px;background:#b9b9b9;"></div>
<div style="left:876.5px;top:704px;width:1.5px;height:1.5px;background:#b9b9b9;"></div>
</div>
</body></html>
